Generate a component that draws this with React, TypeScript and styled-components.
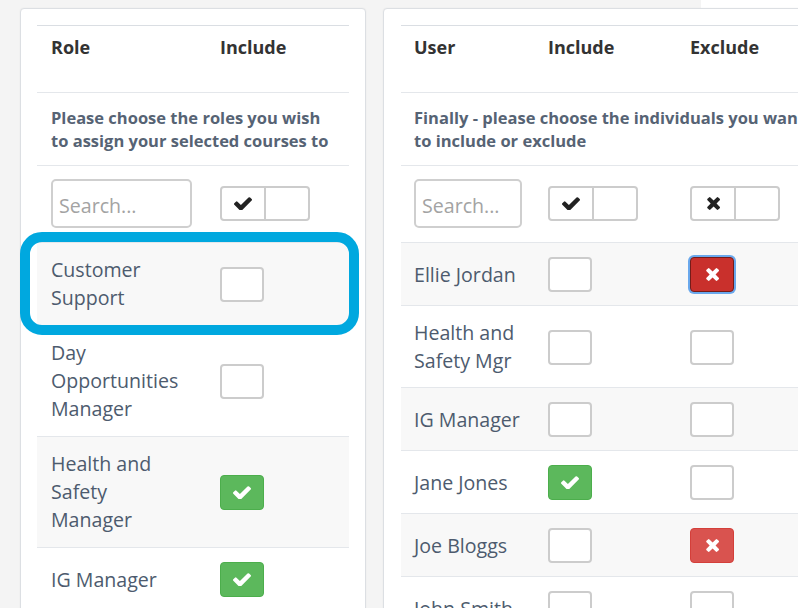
import React from "react";
import styled, { createGlobalStyle, css } from "styled-components";

const Global = createGlobalStyle`
  html, body { margin: 0; padding: 0; }
  body {
    background: #f4f4f4;
    font-family: "Open Sans", "Noto Sans", sans-serif;
    overflow: hidden;
    width: 798px;
    height: 608px;
  }
`;

const Page = styled.div`
  display: flex;
  flex-direction: column;
  width: 798px;
`;

const TopStrip = styled.div`
  display: flex;
  justify-content: flex-end;
  height: 8px;
`;

const TopWhite = styled.div`
  width: 97px;
  background: #ffffff;
`;

const Panels = styled.div`
  display: flex;
  align-items: flex-start;
  gap: 17px;
  padding-left: 20px;
`;

const Panel = styled.div<{ $w: number; $pl: number }>`
  flex: 0 0 auto;
  box-sizing: border-box;
  width: ${(p) => p.$w}px;
  min-height: 700px;
  background: #ffffff;
  border: 1px solid #dcdfe3;
  border-radius: 4px;
  box-shadow: 0 0 2px rgba(0, 0, 0, 0.06);
  padding: 16px 16px 0 ${(p) => p.$pl}px;
`;

const Table = styled.div`
  display: flex;
  flex-direction: column;
`;

const Row = styled.div<{ $cols: string; $striped?: boolean }>`
  position: relative;
  display: grid;
  grid-template-columns: ${(p) => p.$cols};
  align-items: center;
  border-top: 1px solid #e4e7eb;
  background: ${(p) => (p.$striped ? "#f8f8f8" : "#ffffff")};
`;

const HeaderRow = styled(Row)`
  align-items: start;
  height: 67px;
  box-sizing: border-box;
  padding-top: 8px;
  border-top-color: #dadee3;
`;

const DataRow = styled(Row)<{ $pb: number }>`
  padding: 13px 0 ${(p) => p.$pb}px;
`;

const SearchRow = styled(Row)`
  padding: 13px 0 14px;
`;

const Cell = styled.div<{ $px: number; $pr?: number }>`
  padding: 0 ${(p) => p.$pr ?? p.$px}px 0 ${(p) => p.$px}px;
  display: flex;
  align-items: center;
  min-height: 37px;
`;

const HeadCell = styled.div<{ $px: number }>`
  padding: 0 ${(p) => p.$px}px;
  font-size: 18px;
  line-height: 27px;
  font-weight: 700;
  color: #333333;
`;

const InstructionRow = styled.div<{ $px: number }>`
  border-top: 1px solid #e4e7eb;
  padding: 13px ${(p) => p.$px}px 13px;
  font-size: 16.5px;
  line-height: 23px;
  font-weight: 700;
  color: #566374;
  white-space: nowrap;
`;

const Name = styled.div`
  font-size: 19.6px;
  line-height: 28px;
  color: #4d5b6e;
`;

const SearchInput = styled.input`
  box-sizing: border-box;
  width: 100%;
  height: 49px;
  border: 2px solid #cfcfcf;
  border-radius: 5px;
  padding: 4px 6px 0;
  font-family: "Open Sans", sans-serif;
  font-size: 19.6px;
  color: #555;
  outline: none;
  &::placeholder {
    color: #a3a3a3;
  }
`;

const ToggleGroup = styled.div`
  display: inline-flex;
  box-sizing: border-box;
  height: 35px;
  border: 2px solid #cccccc;
  border-radius: 4px;
  background: #fff;
`;

const ToggleSeg = styled.div`
  width: 42px;
  display: flex;
  align-items: center;
  justify-content: center;
  color: #222;
  & + & {
    border-left: 2px solid #cccccc;
  }
`;

type BoxState = "empty" | "on" | "off" | "offActive";

const Box = styled.div<{ $state: BoxState }>`
  box-sizing: border-box;
  width: 44px;
  height: 35px;
  border-radius: 4px;
  display: flex;
  align-items: center;
  justify-content: center;
  color: #ffffff;
  ${(p) =>
    p.$state === "empty" &&
    css`
      background: #ffffff;
      border: 2px solid #cccccc;
    `}
  ${(p) =>
    p.$state === "on" &&
    css`
      background: #5cb85c;
      border: 1px solid #4cae4c;
    `}
  ${(p) =>
    p.$state === "off" &&
    css`
      background: #d9534f;
      border: 1px solid #d43f3a;
    `}
  ${(p) =>
    p.$state === "offActive" &&
    css`
      background: #c9302c;
      border: 1px solid #761c19;
      box-shadow: 0 0 0 2px #6aa8ec;
    `}
`;

const Ring = styled.div`
  position: absolute;
  z-index: 2;
  top: -11px;
  bottom: -10px;
  left: -17px;
  right: -10px;
  border: 10px solid #00a8df;
  border-radius: 22px;
  pointer-events: none;
`;

const CheckIcon = () => (
  <svg width="18" height="13" viewBox="121 338 1550 1088" fill="currentColor">
    <path d="M1671 566q0 40-28 68l-724 724-136 136q-28 28-68 28t-68-28l-136-136-362-362q-28-28-28-68t28-68l136-136q28-28 68-28t68 28l294 295 656-657q28-28 68-28t68 28l136 136q28 28 28 68z" />
  </svg>
);

const TimesIcon = () => (
  <svg width="13" height="13" viewBox="282 366 1208 1188" fill="currentColor">
    <path d="M1490 1322q0 40-28 68l-136 136q-28 28-68 28t-68-28l-294-294-294 294q-28 28-68 28t-68-28l-136-136q-28-28-28-68t28-68l294-294-294-294q-28-28-28-68t28-68l136-136q28-28 68-28t68 28l294 294 294-294q28-28 68-28t68 28l136 136q28 28 28 68t-28 68l-294 294 294 294q28 28 28 68z" />
  </svg>
);

const CheckBox = ({ state }: { state: BoxState }) => (
  <Box $state={state}>
    {state === "on" && <CheckIcon />}
    {(state === "off" || state === "offActive") && <TimesIcon />}
  </Box>
);

const LEFT_COLS = "169px 143px";
const RIGHT_COLS = "134px 142px 1fr";

const roles: { name: string; on: boolean; ring?: boolean }[] = [
  { name: "Customer Support", on: false, ring: true },
  { name: "Day Opportunities Manager", on: false },
  { name: "Health and Safety Manager", on: true },
  { name: "IG Manager", on: true },
];

const users: { name: string; inc: BoxState; exc: BoxState }[] = [
  { name: "Ellie Jordan", inc: "empty", exc: "offActive" },
  { name: "Health and Safety Mgr", inc: "empty", exc: "empty" },
  { name: "IG Manager", inc: "empty", exc: "empty" },
  { name: "Jane Jones", inc: "on", exc: "empty" },
  { name: "Joe Bloggs", inc: "empty", exc: "off" },
  { name: "John Smith", inc: "empty", exc: "empty" },
];

export default function App() {
  return (
    <Page>
      <Global />
      <TopStrip>
        <TopWhite />
      </TopStrip>
      <Panels>
        <Panel $w={346} $pl={16}>
          <Table>
            <HeaderRow $cols={LEFT_COLS}>
              <HeadCell $px={14}>Role</HeadCell>
              <HeadCell $px={14}>Include</HeadCell>
            </HeaderRow>
            <InstructionRow $px={14}>
              Please choose the roles you wish
              <br />
              to assign your selected courses to
            </InstructionRow>
            <SearchRow $cols={LEFT_COLS}>
              <Cell $px={14}>
                <SearchInput placeholder="Search..." />
              </Cell>
              <Cell $px={14}>
                <ToggleGroup>
                  <ToggleSeg>
                    <CheckIcon />
                  </ToggleSeg>
                  <ToggleSeg />
                </ToggleGroup>
              </Cell>
            </SearchRow>
            {roles.map((r, i) => (
              <DataRow key={i} $cols={LEFT_COLS} $striped={i % 2 === 0} $pb={13}>
                <Cell $px={14} $pr={18}>
                  <Name>{r.name}</Name>
                </Cell>
                <Cell $px={14}>
                  <CheckBox state={r.on ? "on" : "empty"} />
                </Cell>
                {r.ring && <Ring />}
              </DataRow>
            ))}
          </Table>
        </Panel>
        <Panel $w={440} $pl={17}>
          <Table>
            <HeaderRow $cols={RIGHT_COLS}>
              <HeadCell $px={13}>User</HeadCell>
              <HeadCell $px={13}>Include</HeadCell>
              <HeadCell $px={13}>Exclude</HeadCell>
            </HeaderRow>
            <InstructionRow $px={13}>
              Finally - please choose the individuals you want
              <br />
              to include or exclude
            </InstructionRow>
            <SearchRow $cols={RIGHT_COLS}>
              <Cell $px={13}>
                <SearchInput placeholder="Search..." />
              </Cell>
              <Cell $px={13}>
                <ToggleGroup>
                  <ToggleSeg>
                    <CheckIcon />
                  </ToggleSeg>
                  <ToggleSeg />
                </ToggleGroup>
              </Cell>
              <Cell $px={13}>
                <ToggleGroup>
                  <ToggleSeg>
                    <TimesIcon />
                  </ToggleSeg>
                  <ToggleSeg />
                </ToggleGroup>
              </Cell>
            </SearchRow>
            {users.map((u, i) => (
              <DataRow key={i} $cols={RIGHT_COLS} $striped={i % 2 === 0} $pb={12}>
                <Cell $px={13}>
                  <Name>{u.name}</Name>
                </Cell>
                <Cell $px={13}>
                  <CheckBox state={u.inc} />
                </Cell>
                <Cell $px={13}>
                  <CheckBox state={u.exc} />
                </Cell>
              </DataRow>
            ))}
          </Table>
        </Panel>
      </Panels>
    </Page>
  );
}
